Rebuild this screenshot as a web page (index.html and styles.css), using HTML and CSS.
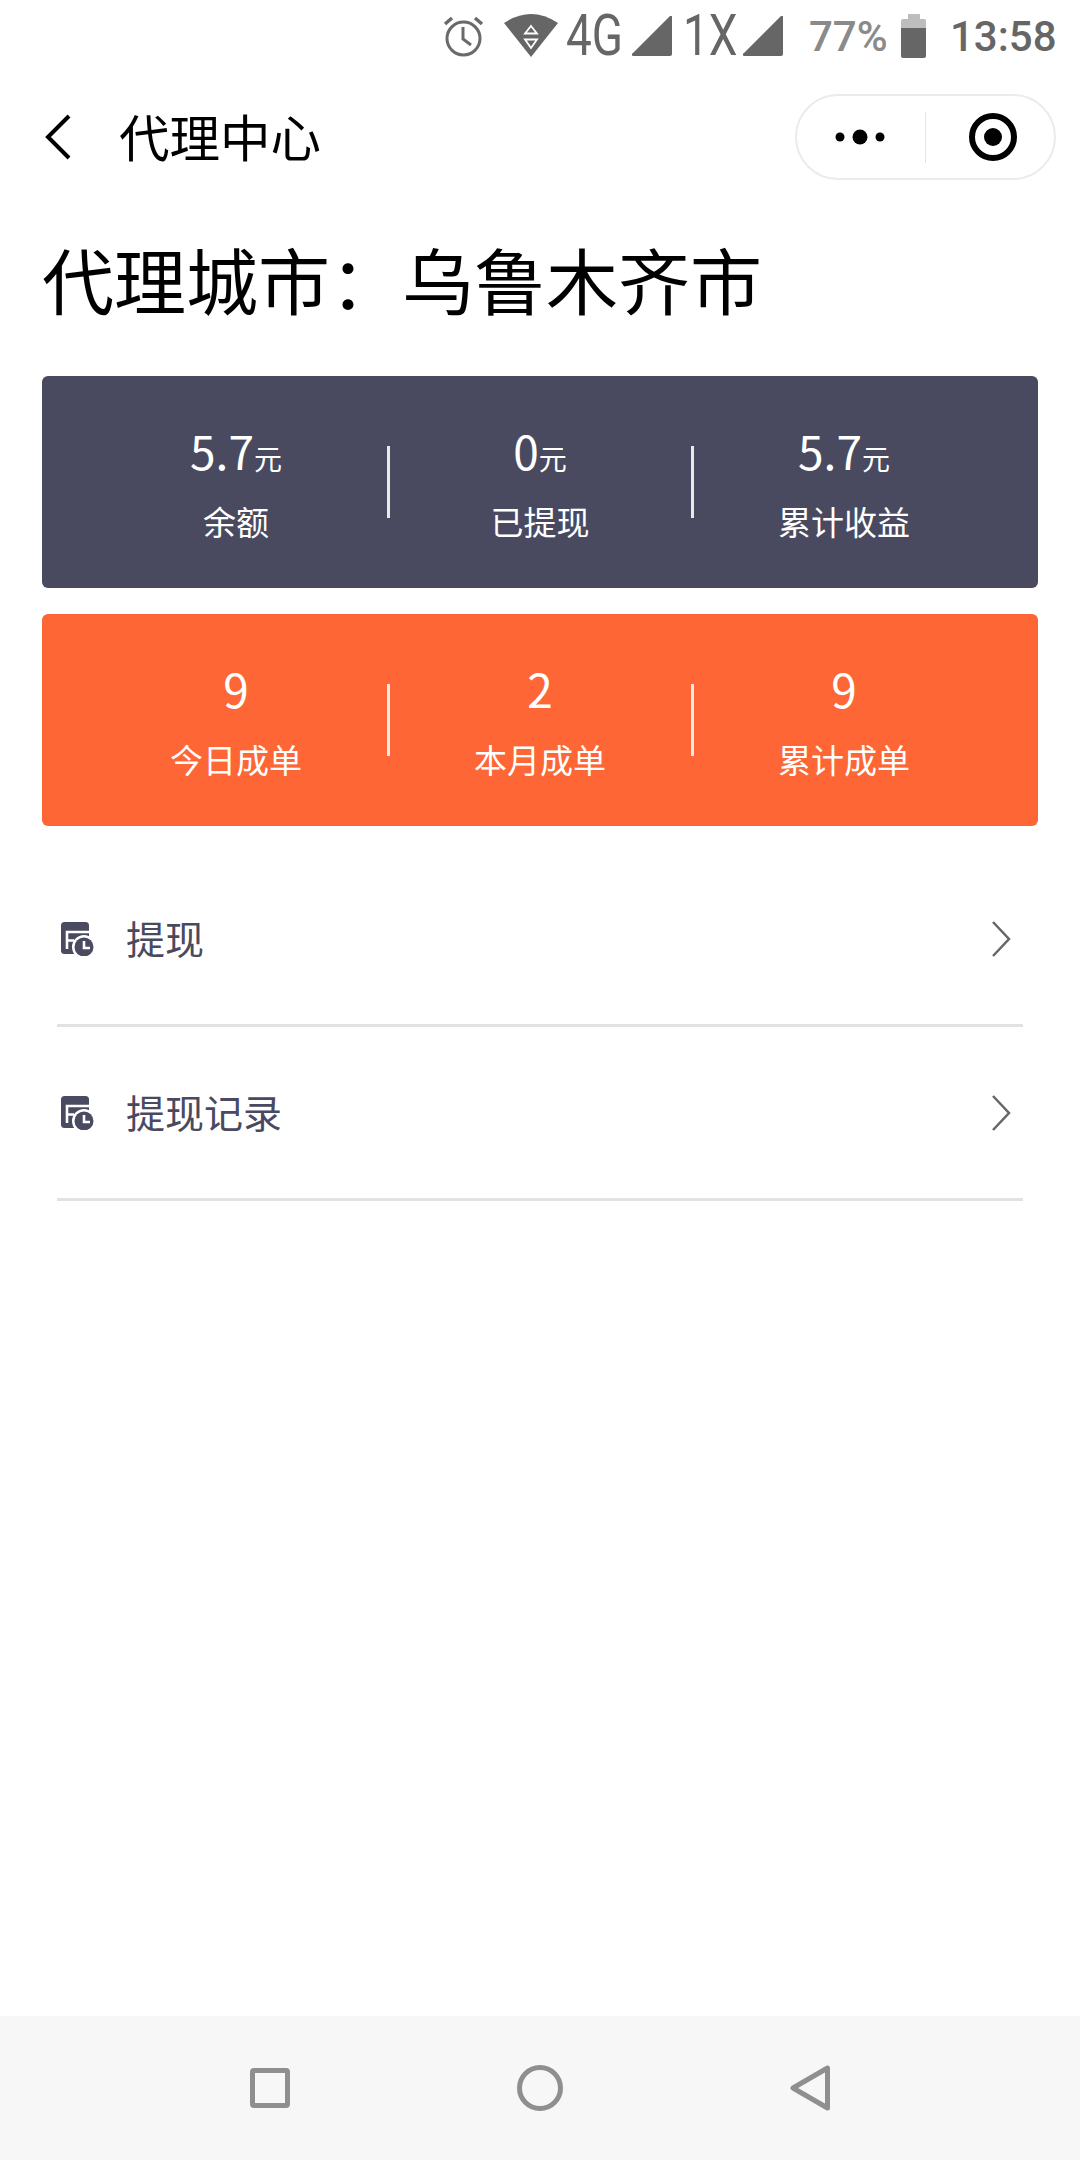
FILE: index.html
```html
<!DOCTYPE html>
<html lang="zh-CN">
<head>
  <meta charset="UTF-8" />
  <meta name="viewport" content="width=device-width, initial-scale=1.0"/>
  <title>代理中心</title>
  <link rel="stylesheet" href="styles.css">
</head>
<body>
  <div class="page">
    <div class="statusbar">
      <svg class="st-alarm" width="41" height="41" viewBox="0 0 41 41">
        <circle cx="20.5" cy="22.5" r="16.5" fill="none" stroke="#6a6a6a" stroke-width="3"/>
        <path d="M20 11v12l8 6" fill="none" stroke="#6a6a6a" stroke-width="3"/>
        <path d="M2 8l7-6M39 8l-7-6" fill="none" stroke="#6a6a6a" stroke-width="3.5"/>
      </svg>
      <svg class="st-wifi" width="54" height="43" viewBox="0 0 54 43">
        <path d="M0 9Q27 -9 54 9L27 43Z" fill="#666"/>
        <path d="M27 12l6 7.500H21ZM27 34l-6-8.500h12Z" fill="none" stroke="#fff" stroke-width="1.800"/>
      </svg>
      <span class="st-net"><span>4G</span></span>
      <svg class="st-signal" width="40" height="40" viewBox="0 0 40 40"><path d="M40 1V38a2 2 0 0 1-2 2H2a1.500 1.500 0 0 1-1-3L38 0a1.200 1.200 0 0 1 2 1Z" fill="#666"/></svg>
      <span class="st-net st-net-x"><span>1X</span></span>
      <svg class="st-signal st-signal-b" width="40" height="40" viewBox="0 0 40 40"><path d="M40 1V38a2 2 0 0 1-2 2H2a1.500 1.500 0 0 1-1-3L38 0a1.200 1.200 0 0 1 2 1Z" fill="#666"/></svg>
      <span class="st-pct">77%</span>
      <svg class="st-batt" width="25" height="44" viewBox="0 0 25 44">
        <path d="M7 0h12v5h4a2 2 0 0 1 2 2v7H0V7a2 2 0 0 1 2-2h5Z" fill="#bdbdbd"/>
        <path d="M0 14h25v28a2 2 0 0 1-2 2H2a2 2 0 0 1-2-2Z" fill="#666"/>
      </svg>
      <span class="st-time">13:58</span>
    </div>

    <div class="navbar">
      <svg class="nav-back" width="26" height="46" viewBox="0 0 26 46"><path d="M24 2L3 23l21 21" fill="none" stroke="#000" stroke-width="4"/></svg>
      <div class="nav-title">代理中心</div>
      <div class="capsule">
        <svg width="62" height="20" viewBox="0 0 62 20">
          <circle cx="9" cy="10" r="4.500"/>
          <circle cx="29" cy="10" r="7.500"/>
          <circle cx="49" cy="10" r="4.500"/>
        </svg>
        <i class="capsule-line"></i>
        <svg width="48" height="48" viewBox="0 0 48 48">
          <circle cx="24" cy="24" r="21" fill="none" stroke="#000" stroke-width="6"/>
          <circle cx="24" cy="24" r="9"/>
        </svg>
      </div>
    </div>

    <h1 class="city">代理城市：乌鲁木齐市</h1>

    <div class="card card-dark">
      <div class="cell">
        <div class="num">5.7<small>元</small></div>
        <div class="label">余额</div>
      </div>
      <div class="cell">
        <div class="num">0<small>元</small></div>
        <div class="label">已提现</div>
      </div>
      <div class="cell">
        <div class="num">5.7<small>元</small></div>
        <div class="label">累计收益</div>
      </div>
    </div>

    <div class="card card-orange">
      <div class="cell">
        <div class="num">9</div>
        <div class="label">今日成单</div>
      </div>
      <div class="cell">
        <div class="num">2</div>
        <div class="label">本月成单</div>
      </div>
      <div class="cell">
        <div class="num">9</div>
        <div class="label">累计成单</div>
      </div>
    </div>

    <div class="menu">
      <div class="row">
        <svg class="row-icon" width="34" height="34" viewBox="0 0 34 34">
          <rect x="1" y="0" width="28" height="32" rx="3.500" fill="#4a4b61"/>
          <path d="M29 10H7v17M7 18.500h7" fill="none" stroke="#fff" stroke-width="2.600"/>
          <circle cx="24" cy="25" r="12" fill="#fff"/>
          <circle cx="24" cy="25" r="9.500" fill="#4a4b61"/>
          <path d="M24 19v7h6" fill="none" stroke="#fff" stroke-width="2.600"/>
        </svg>
        <span class="row-text">提现</span>
        <svg class="row-arrow" width="20" height="36" viewBox="0 0 20 36"><path d="M2 1l16 17L2 35" fill="none" stroke="#666" stroke-width="2.500"/></svg>
      </div>
      <div class="row">
        <svg class="row-icon" width="34" height="34" viewBox="0 0 34 34">
          <rect x="1" y="0" width="28" height="32" rx="3.500" fill="#4a4b61"/>
          <path d="M29 10H7v17M7 18.500h7" fill="none" stroke="#fff" stroke-width="2.600"/>
          <circle cx="24" cy="25" r="12" fill="#fff"/>
          <circle cx="24" cy="25" r="9.500" fill="#4a4b61"/>
          <path d="M24 19v7h6" fill="none" stroke="#fff" stroke-width="2.600"/>
        </svg>
        <span class="row-text">提现记录</span>
        <svg class="row-arrow" width="20" height="36" viewBox="0 0 20 36"><path d="M2 1l16 17L2 35" fill="none" stroke="#666" stroke-width="2.500"/></svg>
      </div>
    </div>

    <div class="softkeys">
      <svg width="40" height="40" viewBox="0 0 40 40"><rect x="2.500" y="2.500" width="35" height="35" rx="1.500" fill="none" stroke="#8f8f8f" stroke-width="5"/></svg>
      <svg width="46" height="46" viewBox="0 0 46 46"><circle cx="23" cy="23" r="20.500" fill="none" stroke="#8f8f8f" stroke-width="5"/></svg>
      <svg width="40" height="46" viewBox="0 0 40 46"><path d="M37.500 3V43L3 23Z" fill="none" stroke="#8f8f8f" stroke-width="5" stroke-linejoin="round"/></svg>
    </div>
  </div>
</body>
</html>
```

FILE: styles.css
```css
:root {
  --color-dark: #494a60;
  --color-orange: #ff6635;
  --font: "Noto Sans CJK SC", "Noto Sans", sans-serif;
}
* {
  box-sizing: border-box;
}
body {
  margin: 0;
  font-family: var(--font);
  background: #fff;
  color: #000;
}
.page {
  height: 2160px;
  display: flex;
  flex-direction: column;
}

/* status bar */
.statusbar {
  height: 73px;
  padding: 14px 26px 0 0;
  display: flex;
  justify-content: flex-end;
  align-items: flex-start;
  font-family: Roboto, sans-serif;
  color: #666;
}
.st-alarm {
  margin-top: 2px;
  margin-right: 20px;
}
.st-wifi {
  margin-right: 8px;
}
.st-signal {
  margin: 2px 0 0 10px;
}
.st-signal-b {
  margin-left: 11px;
}
.st-net {
  width: 56px;
  height: 42px;
  font-size: 58px;
  font-weight: 400;
  line-height: 42px;
}
.st-net span {
  display: inline-block;
  transform: scaleX(0.79);
  transform-origin: left center;
}
.st-net-x {
  width: 49px;
  margin-left: 11px;
}
.st-pct {
  margin-left: 26px;
  width: 76px;
  height: 42px;
  font-size: 42px;
  font-weight: 500;
  line-height: 46px;
  color: #8a8a8a;
  white-space: nowrap;
}
.st-batt {
  margin-left: 16px;
}
.st-time {
  margin-left: 24px;
  width: 104px;
  height: 42px;
  font-size: 42px;
  font-weight: 500;
  line-height: 46px;
}

/* title bar */
.navbar {
  height: 128px;
  padding: 0 24px 0 45px;
  display: flex;
  align-items: center;
}
.nav-title {
  margin-left: 48px;
  padding-bottom: 4px;
  font-size: 50.5px;
  line-height: 60px;
  flex: 1;
}
.capsule {
  width: 261px;
  height: 86px;
  border: 2px solid #ebebeb;
  border-radius: 43px;
  padding-left: 34px;
  display: flex;
  align-items: center;
}
.capsule-line {
  width: 1px;
  height: 51px;
  margin: 0 43px 0 32px;
  background: #e4e4e4;
}

.city {
  margin: 24px 0 45px 42px;
  font-size: 72px;
  font-weight: 400;
  line-height: 106px;
}

/* stat cards */
.card {
  margin: 0 42px 26px;
  height: 212px;
  padding: 0 42px;
  border-radius: 6px;
  display: grid;
  grid-template-columns: repeat(3, 1fr);
  align-items: center;
  color: #fff;
}
.card-dark {
  background: var(--color-dark);
}
.card-orange {
  background: var(--color-orange);
}
.cell {
  position: relative;
  text-align: center;
  height: 72px;
  display: flex;
  flex-direction: column;
  justify-content: center;
}
.cell + .cell::before {
  content: "";
  position: absolute;
  left: -1px;
  top: 0;
  width: 3px;
  height: 72px;
  background: #e9e9e9;
}
.num {
  font-size: 46px;
  line-height: 66px;
  margin-top: -2px;
}
.num small {
  font-size: 28px;
  line-height: 1;
}
.label {
  font-size: 33px;
  line-height: 48px;
  margin-top: 14px;
}

/* menu */
.menu {
  margin: 1px 57px 0;
}
.row {
  height: 174px;
  padding: 0 12px 0 3px;
  border-bottom: 3px solid #e2e2e2;
  display: flex;
  align-items: center;
}
.row-text {
  margin-left: 32px;
  padding-bottom: 3px;
  font-size: 39px;
  color: var(--color-dark);
  flex: 1;
}

/* android keys */
.softkeys {
  margin-top: auto;
  height: 144px;
  background: #f7f7f7;
  padding: 0 250px;
  display: flex;
  justify-content: space-between;
  align-items: center;
}
```
